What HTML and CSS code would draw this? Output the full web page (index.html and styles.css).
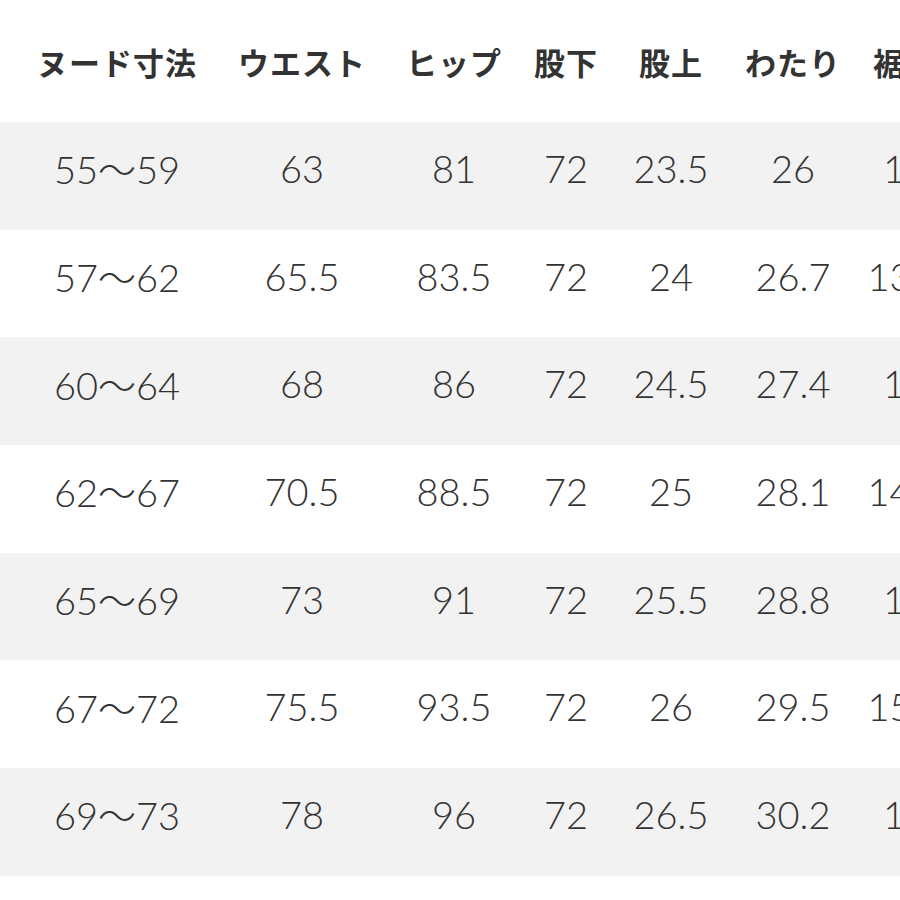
FILE: index.html
```html
<!DOCTYPE html>
<html lang="ja">
<head>
<meta charset="utf-8">
<link rel="stylesheet" href="styles.css">
</head>
<body>
<div class="table">
  <div class="row head">
    <div class="cell">ヌード寸法</div><div class="cell">ウエスト</div><div class="cell">ヒップ</div><div class="cell">股下</div><div class="cell">股上</div><div class="cell">わたり</div><div class="cell">裾幅</div>
  </div>
  <div class="row alt">
    <div class="cell">55〜59</div><div class="cell">63</div><div class="cell">81</div><div class="cell">72</div><div class="cell">23.5</div><div class="cell">26</div><div class="cell">13</div>
  </div>
  <div class="row">
    <div class="cell">57〜62</div><div class="cell">65.5</div><div class="cell">83.5</div><div class="cell">72</div><div class="cell">24</div><div class="cell">26.7</div><div class="cell">13.5</div>
  </div>
  <div class="row alt">
    <div class="cell">60〜64</div><div class="cell">68</div><div class="cell">86</div><div class="cell">72</div><div class="cell">24.5</div><div class="cell">27.4</div><div class="cell">14</div>
  </div>
  <div class="row">
    <div class="cell">62〜67</div><div class="cell">70.5</div><div class="cell">88.5</div><div class="cell">72</div><div class="cell">25</div><div class="cell">28.1</div><div class="cell">14.5</div>
  </div>
  <div class="row alt">
    <div class="cell">65〜69</div><div class="cell">73</div><div class="cell">91</div><div class="cell">72</div><div class="cell">25.5</div><div class="cell">28.8</div><div class="cell">15</div>
  </div>
  <div class="row">
    <div class="cell">67〜72</div><div class="cell">75.5</div><div class="cell">93.5</div><div class="cell">72</div><div class="cell">26</div><div class="cell">29.5</div><div class="cell">15.5</div>
  </div>
  <div class="row alt">
    <div class="cell">69〜73</div><div class="cell">78</div><div class="cell">96</div><div class="cell">72</div><div class="cell">26.5</div><div class="cell">30.2</div><div class="cell">16</div>
  </div>
</div>
</body>
</html>
```

FILE: styles.css
```css
html, body {
  margin: 0;
  padding: 0;
  background: #ffffff;
  overflow: hidden;
  width: 900px;
  height: 900px;
}

.table {
  display: flex;
  flex-direction: column;
  width: 900px;
}

.row {
  display: grid;
  grid-template-columns: 200px 170px 134px 90px 120px 124px 100px;
  padding-left: 17px;
  height: 107.7px;
  align-items: center;
  color: #333333;
  font-family: "Lato", "Noto Sans CJK JP", sans-serif;
  font-weight: 300;
  font-size: 38px;
  white-space: nowrap;
}

.row.alt {
  background: #f2f2f2;
}

.row.head {
  height: 122px;
  font-family: "Noto Sans CJK JP", sans-serif;
  font-weight: 700;
  font-size: 31px;
  color: #333333;
}

.cell {
  text-align: center;
  padding-bottom: 16px;
}

.row.head .cell {
  padding-bottom: 0;
  letter-spacing: 1px;
}
```
